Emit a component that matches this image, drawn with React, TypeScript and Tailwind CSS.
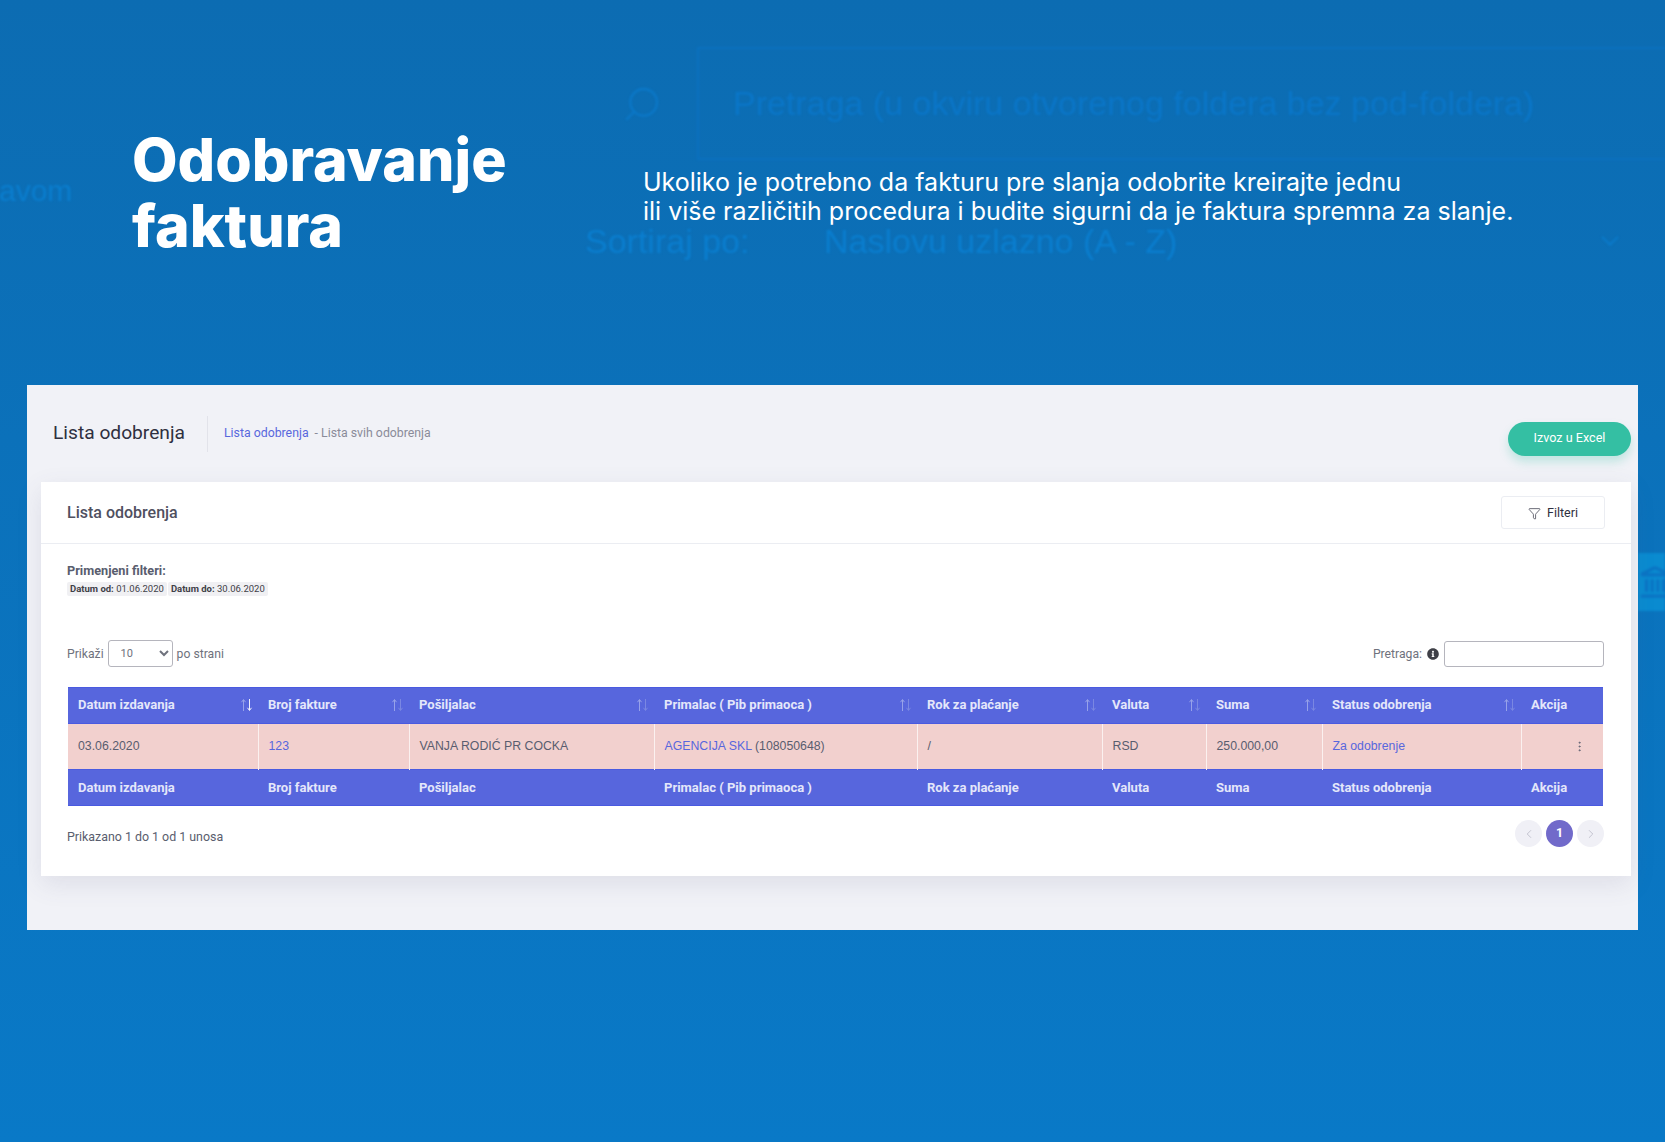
import { ChevronDown, ChevronLeft, ChevronRight, EllipsisVertical, Filter, Landmark, Search } from 'lucide-react'
import { FaInfoCircle } from 'react-icons/fa'

const COLUMNS = [
  { label: 'Datum izdavanja', width: 'w-[190px]' },
  { label: 'Broj fakture', width: 'w-[151px]' },
  { label: 'Pošiljalac', width: 'w-[245px]' },
  { label: 'Primalac ( Pib primaoca )', width: 'w-[263px]' },
  { label: 'Rok za plaćanje', width: 'w-[185px]' },
  { label: 'Valuta', width: 'w-[104px]' },
  { label: 'Suma', width: 'w-[116px]' },
  { label: 'Status odobrenja', width: 'w-[199px]' },
  { label: 'Akcija', width: 'w-[82px]' },
]

function SortArrows({ active }: { active?: boolean }) {
  return (
    <svg width="13" height="14" viewBox="0 0 13 14" className="absolute right-[5px] top-[10px]" fill="none">
      <path d="M3.5 13V2M1.5 4.2 3.5 1.5 5.5 4.2" stroke="#97a2e9" strokeWidth="1" />
      <path d="M9.5 1v11M7.5 9.8l2 2.7 2-2.7" stroke={active ? '#eef0fc' : '#7a87e2'} strokeWidth="1" />
    </svg>
  )
}

function HeadRow({ arrows }: { arrows?: boolean }) {
  return (
    <tr className="h-[36px] bg-[#5766dd]">
      {COLUMNS.map((col, i) => (
        <th
          key={col.label}
          className={`relative border-y border-y-[#4a5ae0] px-[10px] text-left text-[13px] font-bold text-[#e4e7fa] ${arrows ? 'pb-[2px]' : ''}`}
        >
          {col.label}
          {arrows && i < 8 && <SortArrows active={i === 0} />}
        </th>
      ))}
    </tr>
  )
}

function Cell({ children, last }: { children?: React.ReactNode; last?: boolean }) {
  return (
    <td
      className={`border-white/70 px-[10px] text-[12.3px] text-[#595d6e] [font-family:'Liberation_Sans',sans-serif] ${last ? '' : 'border-r'}`}
    >
      {children}
    </td>
  )
}

function Background() {
  return (
    <div className="pointer-events-none absolute inset-0 select-none blur-[1px] [font-family:'Liberation_Sans',sans-serif]">
      <div className="absolute left-[697px] top-[47px] h-[113px] w-[968px] border-2 border-r-0 border-[#0b72c0]" />
      <Search className="absolute left-[622px] top-[84px] h-[40px] w-[40px] -scale-x-100 text-[#0b78c8]" strokeWidth={1.4} />
      <span className="absolute left-[733px] top-[78px] text-[34px] text-[#0a76c8]">
        Pretraga (u okviru otvorenog foldera bez pod-foldera)
      </span>
      <span className="absolute left-[-1px] top-[168px] text-[30px] text-[#0a7ecf]">avom</span>
      <span className="absolute left-[585px] top-[216px] text-[34px] text-[#0a7ecf]">Sortiraj po:</span>
      <span className="absolute left-[824px] top-[216px] text-[34px] text-[#0a7ecf]">Naslovu uzlazno (A - Z)</span>
      <ChevronDown className="absolute left-[1595px] top-[226px] h-[30px] w-[30px] text-[#0a7ecf]" strokeWidth={1.4} />
      <div className="absolute left-[1638px] top-[553px] flex h-[58px] w-[27px] items-center overflow-hidden bg-[#0a8bd0]">
        <Landmark className="h-[34px] w-[34px] shrink-0 text-[#0b74c4]" strokeWidth={2.2} />
      </div>
    </div>
  )
}

export default function App() {
  return (
    <div className="relative h-[1142px] w-[1665px] overflow-hidden bg-gradient-to-b from-[#0c6cb2] to-[#0979c7]">
      <Background />

      <div className="relative">
        {/* Hero */}
        <section className="flex h-[385px] pl-[132px] pt-[127px] text-white">
          <h1 className="w-[511px] text-[59px] font-extrabold leading-[66px] [font-family:Inter,sans-serif]">
            Odobravanje
            <br />
            faktura
          </h1>
          <p className="pt-[41px] text-[25px] leading-[29px] [font-family:Inter,sans-serif]">
            Ukoliko je potrebno da fakturu pre slanja odobrite kreirajte jednu
            <br />
            ili više različitih procedura i budite sigurni da je faktura spremna za slanje.
          </p>
        </section>

        {/* Screenshot panel */}
        <section className="ml-[27px] flex h-[545px] w-[1611px] flex-col bg-[#f1f2f7] pl-[14px] pr-[7px] [font-family:Roboto,sans-serif]">
          <header className="flex h-[97px] items-center">
            <h2 className="ml-[12px] text-[19.2px] text-[#2f3040]">Lista odobrenja</h2>
            <div className="ml-[22px] mr-[16px] h-[36px] w-px bg-[#e2e3ea]" />
            <span className="text-[12.3px] text-[#5867dd]">Lista odobrenja</span>
            <span className="ml-[6px] text-[12.3px] text-[#8a8b99]">- Lista svih odobrenja</span>
            <button className="ml-auto mt-[10px] h-[34px] w-[123px] rounded-full bg-[#34bfa3] text-[12.6px] text-white shadow-[0_6px_10px_rgba(52,191,163,0.25)]">
              Izvoz u Excel
            </button>
          </header>

          <div className="h-[394px] bg-white shadow-[0_8px_24px_rgba(80,80,120,0.12)]">
            <div className="flex h-[62px] items-center justify-between border-b border-[#ebedf2] pl-[26px] pr-[26px]">
              <h3 className="text-[16px] font-medium text-[#50505f]">Lista odobrenja</h3>
              <button className="flex h-[33px] w-[104px] items-center justify-center gap-[6px] rounded-[3px] border border-[#ebedf2] pt-px text-[12.5px] text-[#2f3040]">
                <Filter className="h-[13px] w-[13px]" strokeWidth={1.3} />
                Filteri
              </button>
            </div>

            <div className="pl-[26px] pr-[27px] pt-[19px]">
              <p className="text-[12.7px] font-bold leading-[16px] text-[#595d6e]">Primenjeni filteri:</p>
              <div className="mt-[3px] flex gap-px text-[9.5px] leading-[14px] text-[#3f4047]">
                <span className="rounded-[2px] bg-[#f0f0f3] px-[3px]">
                  <b>Datum od:</b> 01.06.2020
                </span>
                <span className="rounded-[2px] bg-[#f0f0f3] px-[3px]">
                  <b>Datum do:</b> 30.06.2020
                </span>
              </div>

              <div className="mt-[44px] flex h-[27px] items-center text-[12.2px] text-[#6f727d]">
                <span className="pt-px">Prikaži</span>
                <select className="mx-[4px] h-[27px] w-[65px] rounded-[3px] border border-[#b5b5bd] bg-white pl-[8px] text-[11px]">
                  <option>10</option>
                </select>
                <span className="pt-px">po strani</span>
                <span className="ml-auto pt-px">Pretraga:</span>
                <FaInfoCircle className="ml-[5px] h-[12px] w-[12px] text-[#3f4047]" />
                <input className="ml-[5px] h-[26px] w-[160px] rounded-[3px] border border-[#b5b5bd] bg-white" />
              </div>

              <table className="ml-px mt-[20px] w-[1535px] table-fixed border-collapse">
                <colgroup>
                  {COLUMNS.map((col) => (
                    <col key={col.label} className={col.width} />
                  ))}
                </colgroup>
                <thead>
                  <HeadRow arrows />
                </thead>
                <tbody>
                  <tr className="h-[46px] bg-[#f2d0ce]">
                    <Cell>03.06.2020</Cell>
                    <Cell>
                      <span className="text-[#5867dd]">123</span>
                    </Cell>
                    <Cell>VANJA RODIĆ PR COCKA</Cell>
                    <Cell>
                      <span className="text-[#5867dd]">AGENCIJA SKL</span> (108050648)
                    </Cell>
                    <Cell>/</Cell>
                    <Cell>RSD</Cell>
                    <Cell>250.000,00</Cell>
                    <Cell>
                      <span className="text-[#5867dd]">Za odobrenje</span>
                    </Cell>
                    <Cell last>
                      <EllipsisVertical className="ml-auto mr-[7px] h-[13px] w-[13px]" strokeWidth={1.5} />
                    </Cell>
                  </tr>
                </tbody>
                <tfoot>
                  <HeadRow />
                </tfoot>
              </table>

              <div className="mt-[14px] flex h-[27px] items-center justify-between text-[12.4px] text-[#595d6e]">
                <span className="pt-[8px]">Prikazano 1 do 1 od 1 unosa</span>
                <div className="flex gap-[4px]">
                  <span className="flex h-[27px] w-[27px] items-center justify-center rounded-full bg-[#f0f0f6] text-[#b5b5c3]">
                    <ChevronLeft className="h-[14px] w-[14px]" strokeWidth={1.3} />
                  </span>
                  <span className="flex h-[27px] w-[27px] items-center justify-center rounded-full bg-[#716aca] font-bold text-white">
                    1
                  </span>
                  <span className="flex h-[27px] w-[27px] items-center justify-center rounded-full bg-[#f0f0f6] text-[#b5b5c3]">
                    <ChevronRight className="h-[14px] w-[14px]" strokeWidth={1.3} />
                  </span>
                </div>
              </div>
            </div>
          </div>
        </section>
      </div>
    </div>
  )
}
